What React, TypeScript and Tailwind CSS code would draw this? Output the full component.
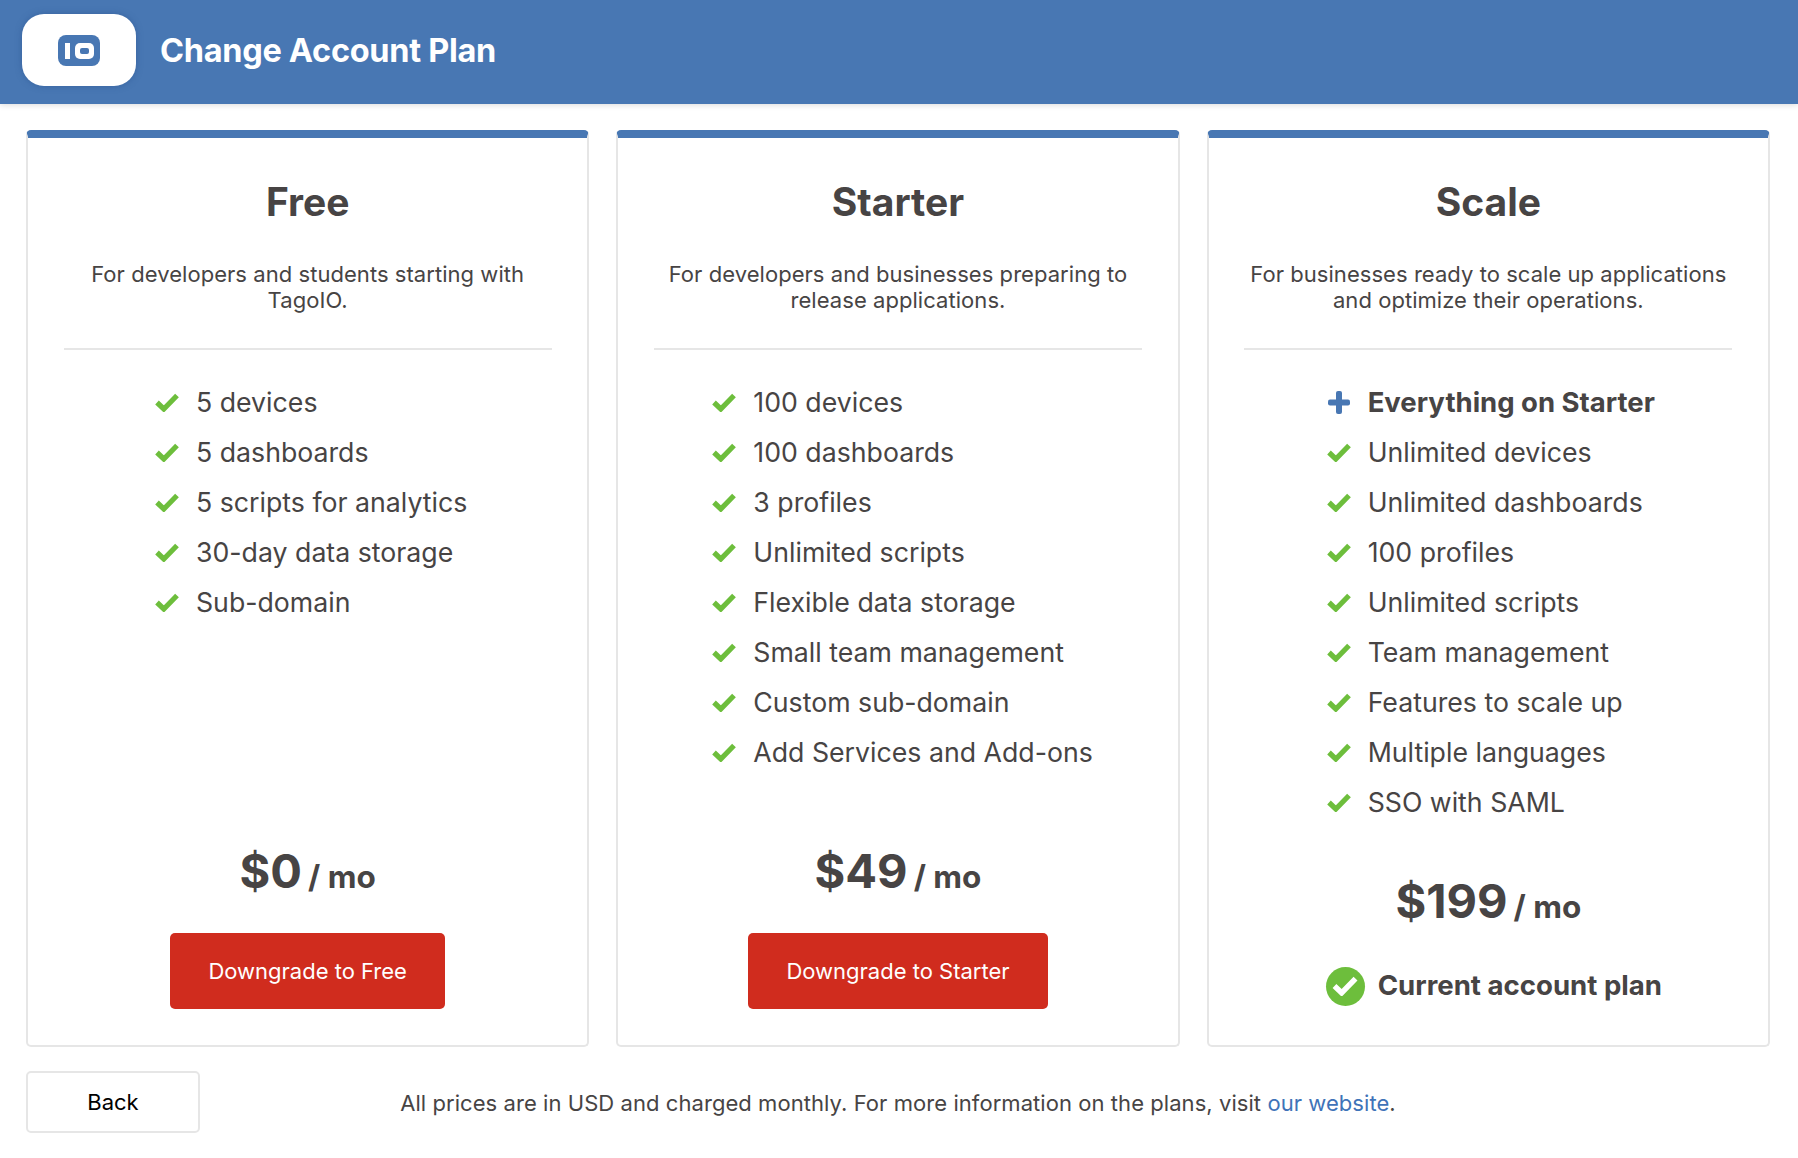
const plans = [
  {
    name: 'Free',
    description: ['For developers and students starting with', 'TagoIO.'],
    features: ['5 devices', '5 dashboards', '5 scripts for analytics', '30-day data storage', 'Sub-domain'],
    price: '$0',
    action: 'Downgrade to Free',
    indent: 'pl-[127px]',
  },
  {
    name: 'Starter',
    description: ['For developers and businesses preparing to', 'release applications.'],
    features: [
      '100 devices',
      '100 dashboards',
      '3 profiles',
      'Unlimited scripts',
      'Flexible data storage',
      'Small team management',
      'Custom sub-domain',
      'Add Services and Add-ons',
    ],
    price: '$49',
    action: 'Downgrade to Starter',
    indent: 'pl-[94px]',
  },
  {
    name: 'Scale',
    description: ['For businesses ready to scale up applications', 'and optimize their operations.'],
    lead: 'Everything on Starter',
    features: [
      'Unlimited devices',
      'Unlimited dashboards',
      '100 profiles',
      'Unlimited scripts',
      'Team management',
      'Features to scale up',
      'Multiple languages',
      'SSO with SAML',
    ],
    price: '$199',
    indent: 'pl-[118px]',
  },
]

const CheckMark = ({ className }: { className: string }) => (
  <svg viewBox="0 0 24 19" className={className} fill="none" stroke="currentColor" strokeWidth="5.2">
    <path d="M2 9.5 L8.8 16 L22 2.5" />
  </svg>
)

const App = () => {
  return (
    <div className="h-[1158px] bg-white font-['Inter',sans-serif] text-[#474444] overflow-hidden">
      <header className="h-[104px] bg-[#4877b3] pl-[22px] pt-[14px] shadow-[0_1px_6px_rgba(0,0,0,0.15)]">
        <div className="flex items-center h-[72px]">
          <div className="w-[114px] h-[72px] bg-white rounded-[22px] flex items-center justify-center shadow-[0_0_6px_rgba(40,80,140,0.5)]">
            <svg viewBox="0 0 42 31" className="w-[42px] h-[31px]">
              <rect x="0" y="0" width="42" height="31" rx="8" fill="#4877b3" />
              <rect x="7" y="8" width="5" height="16" fill="#fff" />
              <rect x="17" y="8" width="19" height="16" rx="5" fill="#fff" />
              <rect x="22" y="13" width="9" height="6" rx="2" fill="#4877b3" />
            </svg>
          </div>
          <h1 className="ml-[24px] mt-[2px] text-[32.5px] font-bold text-white tracking-[-0.3px]">Change Account Plan</h1>
        </div>
      </header>

      <main className="grid grid-cols-3 gap-[27px] pl-[26px] pr-[28px] pt-[26px]">
        {plans.map((plan) => (
          <section
            key={plan.name}
            className="h-[917px] flex flex-col items-center bg-white border-2 border-[#e6e6e6] border-t-[8px] border-t-[#4877b3] rounded-[5px]"
          >
            <h2 className="mt-[41px] text-[39px] leading-[46px] font-bold">{plan.name}</h2>
            <p className="mt-[36px] text-[22px] leading-[26px] text-center tracking-[0.05px]">
              {plan.description[0]}
              <br />
              {plan.description[1]}
            </p>
            <div className="mt-[35px] w-[488px] h-[2px] bg-[#e6e6e6] shrink-0" />
            <ul className={`mt-[27.5px] w-full flex-1 ${plan.indent}`}>
              {plan.lead && (
                <li className="h-[50px] flex items-center text-[27.5px] font-bold">
                  <span className="w-[24px] mr-[17px] flex justify-center">
                    <svg viewBox="0 0 22 23" className="w-[22px] h-[23px] text-[#4877b3]" fill="currentColor">
                      <rect x="8" y="0" width="6" height="23" rx="2" />
                      <rect x="0" y="8.5" width="22" height="6" rx="2" />
                    </svg>
                  </span>
                  {plan.lead}
                </li>
              )}
              {plan.features.map((feature) => (
                <li key={feature} className="h-[50px] flex items-center text-[26.7px]">
                  <CheckMark className="w-[24px] h-[19px] mr-[17px] text-[#6dbe3c]" />
                  {feature}
                </li>
              ))}
            </ul>
            <div className="flex items-baseline gap-[6px] font-bold">
              <span className="text-[47px] leading-[56px]">{plan.price}</span>
              <span className="text-[31.5px]">/ mo</span>
            </div>
            {plan.action ? (
              <button className="mt-[33px] mb-[36px] h-[76px] px-[38.5px] bg-[#d02c1e] rounded-[5px] text-white text-[22px]">
                {plan.action}
              </button>
            ) : (
              <div className="mt-[36px] mb-[39px] pl-[11px] h-[40px] flex items-center gap-[13px] text-[27.6px] font-bold">
                <span className="w-[39px] h-[39px] rounded-full bg-[#6dbe3c] text-white flex items-center justify-center">
                  <CheckMark className="w-[26px] h-[20px]" />
                </span>
                Current account plan
              </div>
            )}
          </section>
        ))}
      </main>

      <footer className="grid grid-cols-[174px_1fr_174px] items-center pl-[26px] pr-[28px] mt-[24px]">
        <button className="h-[62px] pt-[1px] border-2 border-[#e6e6e6] rounded-[5px] bg-white text-black text-[22px]">Back</button>
        <p className="pt-[2px] text-center text-[22px] tracking-[0.06px]">
          All prices are in USD and charged monthly. For more information on the plans, visit{' '}
          <a href="#" className="text-[#3f73b8]">
            our website
          </a>
          .
        </p>
      </footer>
    </div>
  )
}

export default App
